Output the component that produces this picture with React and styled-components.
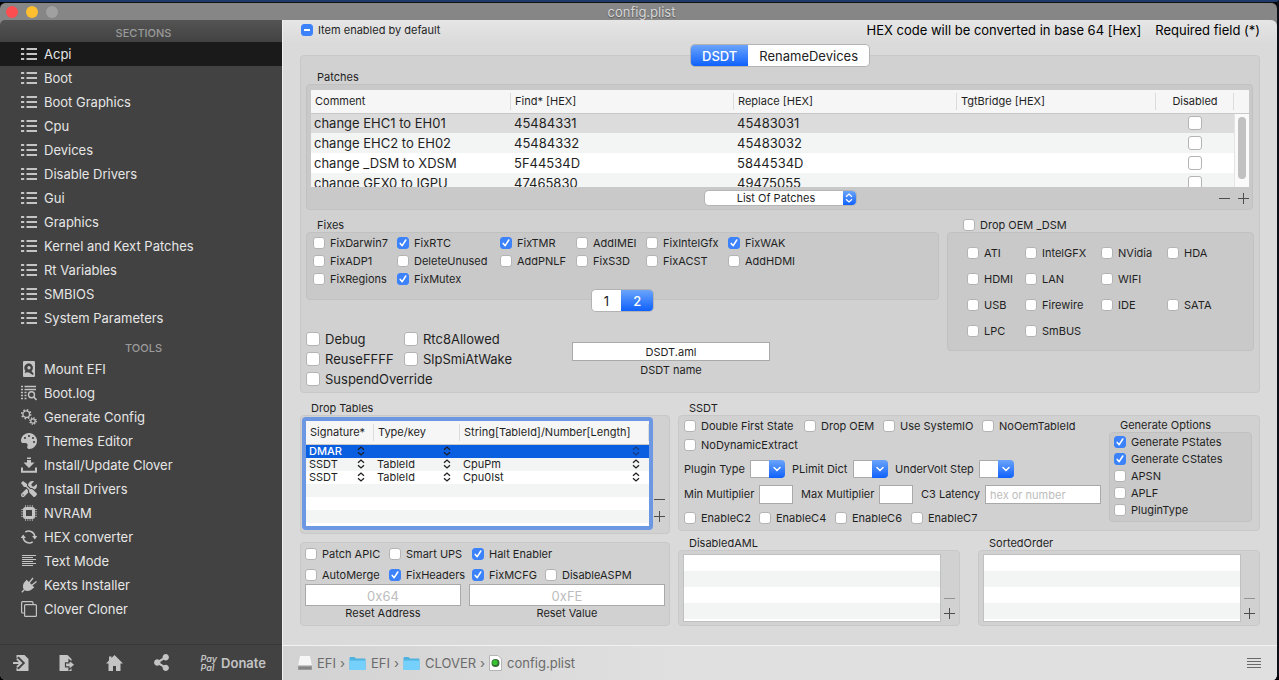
import React from 'react';
import styled, { createGlobalStyle, css } from 'styled-components';
import { FaPalette, FaShareAlt, FaTools } from 'react-icons/fa';

const COLORS = {
  blue: '#3b82fb',
  blueDark: '#0a5ee0',
  text: '#1f1f1f',
  sidebar: '#424242',
  sidebarText: '#e6e6e6',
  sidebarIcon: '#c4c4c4',
  stripe: '#f3f5f5',
};

const blueGradient = 'linear-gradient(#6aa4fa, #0f61fd)';

const GlobalStyle = createGlobalStyle`
  * {
    box-sizing: border-box;
  }

  body {
    margin: 0;
    background: #000;
    color: ${COLORS.text};
    font-family: Inter, 'Liberation Sans', sans-serif;
    font-size: 11px;
    line-height: 14px;
  }

  button,
  input,
  select {
    font: inherit;
    color: inherit;
    margin: 0;
    padding: 0;
    border: 0;
  }
`;

const Window = styled.div`
  display: flex;
  flex-direction: column;
  min-height: 100vh;
  border-top: 2px solid #1d3a6b;
  border-right: 2px solid #0b0f18;
  border-radius: 0 0 6px 6px;
  overflow: hidden;
`;

const TitleBar = styled.header`
  display: flex;
  align-items: center;
  height: 18px;
  padding-left: 6px;
  background: #868686;
  border-top: 1px solid #111;
  border-radius: 6px 6px 0 0;
`;

const Lights = styled.div`
  display: flex;
  flex: 1;
  gap: 8px;
`;

const Light = styled.button`
  width: 12px;
  height: 12px;
  border-radius: 50%;
  background: ${props => props.$color};
`;

const Title = styled.h1`
  margin: 0;
  font-size: 13px;
  font-weight: 400;
  line-height: 16px;
  color: #d6d6d6;
  text-shadow: 0 1px 1px #555;
`;

const TitleSpacer = styled.div`
  flex: 1;
`;

const Body = styled.div`
  display: flex;
  flex: 1;
  background: #868686;
`;

const Sidebar = styled.nav`
  display: flex;
  flex-direction: column;
  flex: none;
  width: 282px;
  background: linear-gradient(#545454, ${COLORS.sidebar} 22px);
  border-radius: 5px 0 0 0;
  color: ${COLORS.sidebarText};
`;

const SidebarHeading = styled.h2`
  margin: 0;
  height: ${props => (props.$spaced ? 27 : 22)}px;
  padding: ${props => (props.$spaced ? 11 : 6)}px 0 0 5px;
  font-size: 11px;
  font-weight: 500;
  line-height: 14px;
  text-align: center;
  color: #9b9b9b;
`;

const SidebarList = styled.ul`
  margin: 0;
  padding: 0;
  list-style: none;
`;

const SidebarLink = styled.a`
  display: flex;
  align-items: center;
  gap: 7px;
  height: 24px;
  padding-left: 21px;
  font-size: 13px;
  line-height: 16px;
  text-decoration: none;
  color: inherit;
  background: ${props => (props.$active ? '#1a1a1a' : 'transparent')};
`;

const Icon = styled.svg`
  display: block;
  flex: none;
  width: 16px;
  height: 16px;
  color: ${COLORS.sidebarIcon};
  fill: none;
  stroke: currentColor;
`;

const PaletteIcon = styled(FaPalette)`
  flex: none;
  color: ${COLORS.sidebarIcon};
  transform: scaleX(-1);
`;

const ToolsIcon = styled(FaTools)`
  flex: none;
  color: ${COLORS.sidebarIcon};
`;

const SidebarFooter = styled.div`
  display: flex;
  align-items: center;
  justify-content: space-between;
  height: 36px;
  margin-top: auto;
  padding: 0 16px 0 13px;
  border-top: 1px solid #383838;
`;

const FooterButton = styled.button`
  display: flex;
  align-items: center;
  gap: 4px;
  background: none;
  color: ${COLORS.sidebarIcon};
  font-size: 13px;
  font-weight: 600;
`;

const PayPal = styled.span`
  font-size: 9px;
  font-style: italic;
  line-height: 9px;
  text-align: left;
`;

const Main = styled.main`
  display: flex;
  flex: 1;
  flex-direction: column;
  min-width: 0;
  border-left: 1px solid #f0f0f0;
  border-radius: 0 6px 0 0;
  background: linear-gradient(#e6e6e6, #dadada 24px);
`;

const Content = styled.div`
  flex: 1;
  padding: 0 17px 18px;
`;

const TopRow = styled.div`
  display: flex;
  align-items: center;
  gap: 14px;
  height: 20px;
  margin-bottom: 15px;
  padding-left: 1px;
`;

const Hint = styled.span`
  font-size: 13px;
  line-height: 16px;
  color: #000;

  &:first-of-type {
    margin-left: auto;
  }
`;

const Panel = styled.section`
  background: #d1d1d1;
  border: 1px solid #c8c8c8;
  border-radius: 4px;
`;

const Well = styled.div`
  background: #c9c9c9;
  border: 1px solid #c1c1c1;
  border-radius: 4px;
`;

const GroupTitle = styled.h3`
  margin: 0;
  padding-left: 11px;
  font-size: 11px;
  font-weight: 400;
  line-height: 14px;
`;

const Segments = styled.div`
  display: flex;
  width: max-content;
  height: 21px;
  margin: ${props => (props.$top ? '-11px auto 0' : '-10px auto 0')};
  border-radius: 4px;
  box-shadow: 0 0 0 1px #b3b3b3;
  overflow: hidden;
`;

const Segment = styled.button`
  padding: 0 ${props => (props.$narrow ? 12 : 11)}px;
  font-size: 13px;
  line-height: 16px;
  background: ${props => (props.$active ? blueGradient : '#fff')};
  color: ${props => (props.$active ? '#fff' : '#222')};
  font-weight: ${props => (props.$active ? 500 : 400)};
`;

const CheckLabel = styled.label`
  display: flex;
  align-items: center;
  gap: 5px;
  font-size: ${props => (props.$large ? 13 : 11)}px;
  line-height: ${props => (props.$large ? 16 : 14)}px;
  white-space: nowrap;
`;

const CheckInput = styled.input`
  appearance: none;
  display: block;
  flex: none;
  width: ${props => (props.$large ? 14 : 12)}px;
  height: ${props => (props.$large ? 14 : 12)}px;
  border: 1px solid #b4b4b4;
  border-radius: 3px;
  background: #fff center / 100% no-repeat;

  &:checked {
    border-color: ${COLORS.blue};
    background-color: ${COLORS.blue};
    background-image: url("data:image/svg+xml,%3Csvg xmlns='http://www.w3.org/2000/svg' viewBox='0 0 10 10'%3E%3Cpath d='M2.2 5.4 4.2 7.7 7.8 2' fill='none' stroke='white' stroke-width='1.5' stroke-linecap='round' stroke-linejoin='round'/%3E%3C/svg%3E");
  }

  ${props =>
    props.$mixed &&
    css`
      &:checked {
        background-image: linear-gradient(#fff, #fff);
        background-size: 6px 2px;
      }
    `}
`;

const PatchesGroup = styled.div`
  padding: 4px 6px 0 5px;
`;

const PatchesWell = styled(Well)`
  padding: 5px 3px 1px 4px;
`;

const TableFrame = styled.div`
  position: relative;
  height: 97px;
  overflow: hidden;
  background: #fff;
`;

const PatchTable = styled.table`
  width: 100%;
  table-layout: fixed;
  border-collapse: collapse;
  font-size: 13px;
  line-height: 16px;

  th {
    height: 23px;
    padding: 0 4px;
    border-bottom: 1px solid #c8c8c8;
    background: linear-gradient(#dcdcdc, #dcdcdc) right center / 1px 17px no-repeat #f6f6f6;
    font-size: 11px;
    font-weight: 400;
    line-height: 14px;
    text-align: left;
  }

  th:nth-child(5) {
    text-align: center;
  }

  td {
    height: 20px;
    padding: 0 3px;
    white-space: nowrap;
  }

  tbody tr:nth-child(even) {
    background: ${COLORS.stripe};
  }

  tbody tr:first-child {
    background: #dcdcdc;
  }

  td input {
    margin: 0 auto;
  }
`;

const ScrollTrack = styled.div`
  position: absolute;
  top: 24px;
  right: 0;
  bottom: 0;
  width: 15px;
  padding: 3px;
  border-left: 1px solid #e4e4e4;
  background: #fafafa;
`;

const ScrollThumb = styled.div`
  width: 8px;
  height: 62px;
  border-radius: 4px;
  background: #c1c1c1;
`;

const PatchesFooter = styled.div`
  display: grid;
  grid-template-columns: 1fr auto 1fr;
  align-items: center;
  height: 21px;
`;

const SelectWrap = styled.div`
  position: relative;
  grid-column: 2;
  width: 151px;
  height: 14px;
  border-radius: 4px;
  background: #fff;
  box-shadow: 0 0 0 1px #b5b5b5;
  overflow: hidden;

  select {
    appearance: none;
    display: block;
    width: 100%;
    height: 14px;
    padding-right: 8px;
    background: transparent;
    text-align: center;
    text-align-last: center;
  }
`;

const SelectCap = styled.span`
  position: absolute;
  top: 0;
  right: 0;
  display: flex;
  align-items: center;
  justify-content: center;
  width: 13px;
  height: 100%;
  background: ${blueGradient};
  color: #fff;
  pointer-events: none;
`;

const AddRemove = styled.div`
  display: flex;
  flex-direction: ${props => (props.$vertical ? 'column' : 'row')};
  align-items: center;
  justify-content: flex-end;
  gap: ${props => props.$gap || 0}px;
  padding-bottom: ${props => props.$bottom || 0}px;
`;

const GlyphButton = styled.button`
  display: flex;
  background: none;
  color: ${props => (props.$muted ? '#949494' : '#4d4d4d')};
`;

const Columns = styled.div`
  display: grid;
  grid-template-columns: minmax(0, 633fr) minmax(0, 307fr);
  gap: 8px;
  padding: 8px 5px 3px;
`;

const FixesWell = styled(Well)`
  display: grid;
  grid-template-columns: 84px 103px 76px 70px 82px auto;
  justify-content: start;
  grid-auto-rows: 18px;
  height: 68px;
  padding: 1px 6px;
`;

const OptionsRow = styled.div`
  display: grid;
  grid-template-columns: 266px 198px;
  align-items: start;
  padding-top: 18px;
`;

const OptionsGrid = styled.div`
  display: grid;
  grid-template-columns: 98px auto;
  justify-content: start;
  grid-auto-rows: 20px;
`;

const Field = styled.label`
  display: flex;
  flex-direction: column;
  gap: ${props => props.$gap || 0}px;
  padding-top: ${props => props.$top || 0}px;
  text-align: center;
`;

const TextInput = styled.input`
  width: ${props => (props.$width ? `${props.$width}px` : '100%')};
  height: ${props => props.$height || 19}px;
  border: 1px solid #a9a9a9;
  background: #fff;
  text-align: ${props => (props.$left ? 'left' : 'center')};
  padding: 1px 4px 0;
  font-size: ${props => (props.$large ? 13 : 11)}px;

  &::placeholder {
    color: #bdbdbd;
    opacity: 1;
  }
`;

const DropOemTitle = styled.div`
  padding-left: 16px;
`;

const OemWell = styled(Well)`
  display: grid;
  grid-template-columns: 58px 76px 66px auto;
  justify-content: start;
  grid-auto-rows: 26px;
  height: 119px;
  padding: 7px 19px 0;
`;

const LowerGrid = styled.div`
  display: grid;
  grid-template-columns: minmax(0, 370fr) minmax(0, 582fr);
  gap: 8px;
  padding-top: 8px;
`;

const DropPanel = styled(Panel)`
  display: flex;
  gap: 1px;
  height: 119px;
  padding: 1px 4px 3px 1px;
`;

const FocusFrame = styled.div`
  flex: 1;
  border: 4px solid #6c97e3;
  border-radius: 4px;
  background: repeating-linear-gradient(#fff 0 13px, ${COLORS.stripe} 13px 26px) 0 24px;
  overflow: hidden;
`;

const DropTable = styled.table`
  width: 100%;
  table-layout: fixed;
  border-collapse: collapse;
  line-height: 13px;

  th {
    height: 23px;
    padding: 0 4px;
    border-bottom: 1px solid #c8c8c8;
    background: linear-gradient(#dcdcdc, #dcdcdc) right center / 1px 17px no-repeat #f6f6f6;
    font-weight: 400;
    text-align: left;
    white-space: nowrap;
  }

  td {
    height: 13px;
    padding: 0 9px 0 3px;
  }

  tbody tr:first-child {
    background: ${COLORS.blueDark};
  }

  tbody tr:first-child span {
    color: #fff;
    font-weight: 500;
  }
`;

const Cell = styled.div`
  display: flex;
  align-items: center;
  justify-content: space-between;
  height: 13px;
`;

const ResetPanel = styled(Panel)`
  height: 84px;
  margin-top: 8px;
  padding: 0 4px;
`;

const ResetChecks = styled.div`
  display: grid;
  grid-template-columns: 84px 83px 73px auto;
  justify-content: start;
  grid-auto-rows: 21px;
  height: 41px;

  label:nth-child(4) {
    grid-column: 1;
  }
`;

const ResetFields = styled.div`
  display: grid;
  grid-template-columns: 156fr 196fr;
  gap: 8px;
`;

const SsdtPanel = styled(Panel)`
  display: flex;
  justify-content: space-between;
  height: 116px;
  padding: 0 7px 0 5px;
`;

const SsdtRow = styled.div`
  display: grid;
  grid-template-columns: ${props => props.$columns};
  align-items: center;
  height: ${props => props.$height}px;
  white-space: nowrap;
`;

const Combo = styled.span`
  position: relative;
  display: block;
  width: 35px;
  height: 18px;
  border: 1px solid #a9a9a9;
  border-radius: 0 4px 4px 0;
  background: #fff;

  select {
    appearance: none;
    display: block;
    width: 100%;
    height: 100%;
    background: transparent;
  }
`;

const ComboCap = styled.span`
  position: absolute;
  top: -1px;
  right: -1px;
  bottom: -1px;
  display: flex;
  align-items: center;
  justify-content: center;
  width: 16px;
  border-radius: 0 4px 4px 0;
  background: ${blueGradient};
  color: #fff;
  pointer-events: none;
`;

const GenerateGroup = styled.div`
  width: 143px;
  padding-top: 2px;
`;

const GenerateWell = styled(Well)`
  display: grid;
  grid-auto-rows: 17px;
  height: 90px;
  padding: 0 4px;
`;

const ListsRow = styled.div`
  display: grid;
  grid-template-columns: 1fr 1fr;
  gap: 18px;
  padding-top: 5px;
`;

const ListPanel = styled(Panel)`
  display: flex;
  gap: 3px;
  height: 76px;
  padding: 3px 4px 3px 4px;
`;

const StripedList = styled.div`
  flex: 1;
  border: 1px solid #c0c0c0;
  background: repeating-linear-gradient(#fff 0 16px, ${COLORS.stripe} 16px 32px);
`;

const PathBar = styled.footer`
  display: flex;
  align-items: center;
  gap: 4px;
  height: 35px;
  padding: 0 16px 0 15px;
  border-top: 1px solid #f2f2f2;
  background: linear-gradient(90deg, #d2d2d2, #e0e0e0 40%);
  font-size: 13px;
  line-height: 16px;
  color: #6b6b6b;
`;

const Crumb = styled.a`
  display: flex;
  align-items: center;
  gap: 5px;
  color: inherit;
  text-decoration: none;
`;

const MenuButton = styled.button`
  display: flex;
  margin-left: auto;
  background: none;
  color: #6a6a6a;
`;

const ListIcon = () => (
  <Icon viewBox="0 0 16 16" strokeWidth="1.9">
    <path d="M0 3h3.200M0 8h3.200M0 13h3.200M5.500 3H16M5.500 8H16M5.500 13H16" />
  </Icon>
);

const DiskIcon = () => (
  <Icon viewBox="0 0 16 16">
    <path
      fill="currentColor"
      stroke="none"
      fillRule="evenodd"
      d="M3.500 0h9.200A1.300 1.300 0 0 1 14 1.300V15a1 1 0 0 1-1 1H3a1 1 0 0 1-1-1V1.300A1.300 1.300 0 0 1 3.500 0zM8 2.200a4.600 4.600 0 0 0-3.600 7.500l-.8 2.300 2.600-.8c.6.200 1.200.300 1.800.300L11.800 14l1-1-2.300-3A4.600 4.600 0 0 0 8 2.200zM8 5a1.700 1.700 0 1 1 0 3.400A1.700 1.700 0 0 1 8 5z"
    />
  </Icon>
);

const LogIcon = () => (
  <Icon viewBox="0 0 16 16" strokeWidth="1.4">
    <path d="M0 1.500h2M0 4.500h2M0 7.500h2M0 10.500h2M0 13.500h2M3.500 1.500H15M3.500 4.500H15M3.500 7.500h2M3.500 10.500h2M3.500 13.500h2" />
    <circle cx="10.500" cy="9.800" r="3" />
    <path d="M12.700 12 15.500 15" strokeWidth="1.600" />
  </Icon>
);

const GearsIcon = () => (
  <Icon viewBox="0 0 16 16">
    <circle cx="5.200" cy="5.200" r="3.300" strokeWidth="1.300" />
    <circle cx="5.200" cy="5.200" r="4.400" strokeWidth="1.700" strokeDasharray="1.500 1.956" />
    <circle cx="12" cy="12" r="2.200" strokeWidth="1.200" />
    <circle cx="12" cy="12" r="3.200" strokeWidth="1.400" strokeDasharray="1.200 1.313" />
  </Icon>
);

const DownloadIcon = () => (
  <Icon viewBox="0 0 16 16">
    <path fill="currentColor" stroke="none" d="M6 .5h4V2H6zM6 3h4v2.500h3.500L8 11 2.500 5.500H6z" />
    <path d="M1 10.500v4.200h14v-4.200" strokeWidth="2" />
  </Icon>
);

const ChipIcon = () => (
  <Icon viewBox="0 0 16 16">
    <rect x="3.500" y="3.500" width="9" height="9" rx="1" strokeWidth="3" />
    <path
      d="M4.500 0v2M6.800 0v2M9.100 0v2M11.400 0v2M4.500 14v2M6.800 14v2M9.100 14v2M11.400 14v2M0 4.500h2M0 6.800h2M0 9.100h2M0 11.400h2M14 4.500h2M14 6.800h2M14 9.100h2M14 11.400h2"
      opacity="0.700"
    />
  </Icon>
);

const RefreshIcon = () => (
  <Icon viewBox="0 0 16 16" strokeWidth="1.500">
    <path d="M4.300 3.200A6 6 0 0 1 13.800 8M11.700 12.800A6 6 0 0 1 2.200 8" />
    <path fill="currentColor" stroke="none" d="M-.3 9 2.200 5.500 4.900 9zM11.100 7h5.200l-2.500 3.500z" />
  </Icon>
);

const TextIcon = () => (
  <Icon viewBox="0 0 16 16" shapeRendering="crispEdges">
    <path d="M1 2.500h14M1 4.500h11M1 6.500h14M1 8.500h11M1 10.500h14M1 12.500h11" />
  </Icon>
);

const PlugIcon = () => (
  <Icon viewBox="0 0 16 16" strokeWidth="1.300">
    <path fill="currentColor" stroke="none" d="M5.500 3.500 12.500 10.500C10.500 14 6 15.200 3.200 12.800 .8 10 2 5.500 5.500 3.500z" />
    <path d="M5.200 3.200 12.800 10.800M8 6 12 1M10.500 8.500 15.500 4.500M3.500 12.500.8 15.300" />
  </Icon>
);

const CopyIcon = () => (
  <Icon viewBox="0 0 16 16" strokeWidth="1.200">
    <rect x="3.600" y="3.600" width="11.800" height="11.800" rx="1" />
    <path d="M3 12H1.600a1 1 0 0 1-1-1V1.600a1 1 0 0 1 1-1H11a1 1 0 0 1 1 1V3" />
  </Icon>
);

const ImportIcon = () => (
  <Icon viewBox="0 0 16 16">
    <path fill="currentColor" stroke="none" d="M3.500 0h8l4 4v12h-12z" />
    <path d="M0 8h8M4 3l5 5-5 5" stroke={COLORS.sidebar} strokeWidth="4.500" />
    <path d="M0 8h8M4 3.800 8.200 8 4 12.200" strokeWidth="1.900" />
  </Icon>
);

const ExportIcon = () => (
  <Icon viewBox="0 0 16 16">
    <path fill="currentColor" stroke="none" d="M.5 0h8l4 4v12H.5z" />
    <path
      fill="currentColor"
      stroke={COLORS.sidebar}
      strokeWidth="1.200"
      d="M6.500 7.800H10V4.800l6 5-6 5v-3H6.500z"
    />
  </Icon>
);

const HomeIcon = () => (
  <svg width="17" height="16" viewBox="0 0 17 16" fill="currentColor">
    <path d="M8.500 0 17 8.500h-2.500V16H10v-5H7v5H2.500V8.500H0l3-3V1.500h2.500V3z" />
  </svg>
);

const UpDownIcon = ({ faded }) => (
  <svg width="8" height="10" viewBox="0 0 8 10" fill="none" stroke="currentColor" strokeWidth="1.300" opacity={faded ? 0.5 : 1}>
    <path d="M1 3.700 4 1l3 2.700M1 6.300 4 9l3-2.700" />
  </svg>
);

const ChevronIcon = () => (
  <svg width="8" height="6" viewBox="0 0 8 6" fill="none" stroke="currentColor" strokeWidth="1.500" strokeLinecap="round">
    <path d="m1 1.500 3 3 3-3" />
  </svg>
);

const Minus = ({ muted }) => (
  <GlyphButton type="button" aria-label="Remove" $muted={muted}>
    <svg width="11" height="12" viewBox="0 0 11 12" stroke="currentColor">
      <path d="M0 6.500h11" />
    </svg>
  </GlyphButton>
);

const Plus = () => (
  <GlyphButton type="button" aria-label="Add">
    <svg width="11" height="12" viewBox="0 0 11 12" stroke="currentColor">
      <path d="M0 6.500h11M5.500 1v11" />
    </svg>
  </GlyphButton>
);

const DriveIcon = () => (
  <svg width="14" height="16" viewBox="0 0 14 16">
    <path d="M2 1h10l2 10H0z" fill="#f6f6f6" />
    <path d="M0 10.500h14V15H0z" fill="#9a9a9a" />
    <path d="M1 13h12" stroke="#6f6f6f" />
  </svg>
);

const FolderIcon = () => (
  <svg width="17" height="15" viewBox="0 0 17 15">
    <path d="M.5 2q0-1 1-1h4l1.500 1.500h8.500q1 0 1 1V13q0 1-1 1h-14q-1 0-1-1z" fill="#4fb2df" />
    <path d="M.5 4.500h16V13q0 1-1 1h-14q-1 0-1-1z" fill="#75d0fb" />
  </svg>
);

const PlistIcon = () => (
  <svg width="13" height="16" viewBox="0 0 13 16">
    <path d="M.5.5h8.500l3.500 3.500v11.500H.5z" fill="#fff" stroke="#b5b5b5" />
    <circle cx="6.500" cy="8" r="4" fill="#3a6b3a" />
    <circle cx="6" cy="7.500" r="2.600" fill="#35c52c" />
  </svg>
);

const SECTIONS = [
  'Acpi',
  'Boot',
  'Boot Graphics',
  'Cpu',
  'Devices',
  'Disable Drivers',
  'Gui',
  'Graphics',
  'Kernel and Kext Patches',
  'Rt Variables',
  'SMBIOS',
  'System Parameters',
];

const TOOLS = [
  { text: 'Mount EFI', icon: <DiskIcon /> },
  { text: 'Boot.log', icon: <LogIcon /> },
  { text: 'Generate Config', icon: <GearsIcon /> },
  { text: 'Themes Editor', icon: <PaletteIcon size={16} /> },
  { text: 'Install/Update Clover', icon: <DownloadIcon /> },
  { text: 'Install Drivers', icon: <ToolsIcon size={16} /> },
  { text: 'NVRAM', icon: <ChipIcon /> },
  { text: 'HEX converter', icon: <RefreshIcon /> },
  { text: 'Text Mode', icon: <TextIcon /> },
  { text: 'Kexts Installer', icon: <PlugIcon /> },
  { text: 'Clover Cloner', icon: <CopyIcon /> },
];

const PATCHES = [
  ['change EHC1 to EH01', '45484331', '45483031'],
  ['change EHC2 to EH02', '45484332', '45483032'],
  ['change _DSM to XDSM', '5F44534D', '5844534D'],
  ['change GFX0 to IGPU', '47465830', '49475055'],
];

const FIXES = [
  ['FixDarwin7'],
  ['FixRTC', true],
  ['FixTMR', true],
  ['AddIMEI'],
  ['FixIntelGfx'],
  ['FixWAK', true],
  ['FixADP1'],
  ['DeleteUnused'],
  ['AddPNLF'],
  ['FixS3D'],
  ['FixACST'],
  ['AddHDMI'],
  ['FixRegions'],
  ['FixMutex', true],
];

const OEM = [
  ['ATI', 'IntelGFX', 'NVidia', 'HDA'],
  ['HDMI', 'LAN', 'WIFI', null],
  ['USB', 'Firewire', 'IDE', 'SATA'],
  ['LPC', 'SmBUS'],
];

const DROP_TABLES = [
  ['DMAR', '', ''],
  ['SSDT', 'TableId', 'CpuPm'],
  ['SSDT', 'TableId', 'Cpu0Ist'],
];

const Check = ({ label, checked, large, mixed }) => (
  <CheckLabel $large={large}>
    <CheckInput type="checkbox" defaultChecked={checked} $large={large} $mixed={mixed} />
    {label}
  </CheckLabel>
);

const ComboBox = ({ label }) => (
  <Combo>
    <select aria-label={label} />
    <ComboCap>
      <ChevronIcon />
    </ComboCap>
  </Combo>
);

const EditableList = ({ title }) => (
  <div>
    <GroupTitle>{title}</GroupTitle>
    <ListPanel>
      <StripedList />
      <AddRemove $vertical $gap={3} $bottom={3}>
        <Minus muted />
        <Plus />
      </AddRemove>
    </ListPanel>
  </div>
);

const SideNav = () => (
  <Sidebar>
    <SidebarHeading>SECTIONS</SidebarHeading>
    <SidebarList>
      {SECTIONS.map((text, index) => (
        <li key={text}>
          <SidebarLink href="#" $active={index === 0}>
            <ListIcon />
            {text}
          </SidebarLink>
        </li>
      ))}
    </SidebarList>
    <SidebarHeading $spaced>TOOLS</SidebarHeading>
    <SidebarList>
      {TOOLS.map(({ text, icon }) => (
        <li key={text}>
          <SidebarLink href="#">
            {icon}
            {text}
          </SidebarLink>
        </li>
      ))}
    </SidebarList>
    <SidebarFooter>
      <FooterButton type="button" aria-label="Import">
        <ImportIcon />
      </FooterButton>
      <FooterButton type="button" aria-label="Export">
        <ExportIcon />
      </FooterButton>
      <FooterButton type="button" aria-label="Home">
        <HomeIcon />
      </FooterButton>
      <FooterButton type="button" aria-label="Share">
        <FaShareAlt size={17} />
      </FooterButton>
      <FooterButton type="button">
        <PayPal>
          Pay
          <br />
          Pal
        </PayPal>
        Donate
      </FooterButton>
    </SidebarFooter>
  </Sidebar>
);

const Patches = () => (
  <PatchesGroup>
    <GroupTitle>Patches</GroupTitle>
    <PatchesWell>
      <TableFrame>
        <PatchTable>
          <colgroup>
            <col width="200" />
            <col width="223" />
            <col width="223" />
            <col width="199" />
            <col width="78" />
            <col width="16" />
          </colgroup>
          <thead>
            <tr>
              <th>Comment</th>
              <th>Find* [HEX]</th>
              <th>Replace [HEX]</th>
              <th>TgtBridge [HEX]</th>
              <th>Disabled</th>
              <th />
            </tr>
          </thead>
          <tbody>
            {PATCHES.map(([comment, find, replace]) => (
              <tr key={comment}>
                <td>{comment}</td>
                <td>{find}</td>
                <td>{replace}</td>
                <td />
                <td>
                  <CheckInput type="checkbox" aria-label={`Disable ${comment}`} $large />
                </td>
                <td />
              </tr>
            ))}
          </tbody>
        </PatchTable>
        <ScrollTrack>
          <ScrollThumb />
        </ScrollTrack>
      </TableFrame>
      <PatchesFooter>
        <SelectWrap>
          <select aria-label="List Of Patches">
            <option>List Of Patches</option>
          </select>
          <SelectCap>
            <UpDownIcon />
          </SelectCap>
        </SelectWrap>
        <AddRemove $gap={8}>
          <Minus />
          <Plus />
        </AddRemove>
      </PatchesFooter>
    </PatchesWell>
  </PatchesGroup>
);

const DropTables = () => (
  <div>
    <GroupTitle>Drop Tables</GroupTitle>
    <DropPanel>
      <FocusFrame>
        <DropTable>
          <colgroup>
            <col width="68" />
            <col width="86" />
            <col width="189" />
          </colgroup>
          <thead>
            <tr>
              <th>Signature*</th>
              <th>Type/key</th>
              <th>String[TableId]/Number[Length]</th>
            </tr>
          </thead>
          <tbody>
            {DROP_TABLES.map((cells, row) => (
              <tr key={row}>
                {cells.map((cell, column) => (
                  <td key={column}>
                    <Cell>
                      <span>{cell}</span>
                      <UpDownIcon faded={row === 0 && column === 2} />
                    </Cell>
                  </td>
                ))}
              </tr>
            ))}
          </tbody>
        </DropTable>
      </FocusFrame>
      <AddRemove $vertical $gap={5} $bottom={8}>
        <Minus />
        <Plus />
      </AddRemove>
    </DropPanel>
    <ResetPanel>
      <ResetChecks>
        <Check label="Patch APIC" />
        <Check label="Smart UPS" />
        <Check label="Halt Enabler" checked />
        <Check label="AutoMerge" />
        <Check label="FixHeaders" checked />
        <Check label="FixMCFG" checked />
        <Check label="DisableASPM" />
      </ResetChecks>
      <ResetFields>
        <Field>
          <TextInput placeholder="0x64" $height={22} $large />
          Reset Address
        </Field>
        <Field>
          <TextInput placeholder="0xFE" $height={22} $large />
          Reset Value
        </Field>
      </ResetFields>
    </ResetPanel>
  </div>
);

const Ssdt = () => (
  <div>
    <GroupTitle>SSDT</GroupTitle>
    <SsdtPanel>
      <div>
        <SsdtRow $columns="120px 79px 99px auto" $height={20}>
          <Check label="Double First State" />
          <Check label="Drop OEM" />
          <Check label="Use SystemIO" />
          <Check label="NoOemTableId" />
        </SsdtRow>
        <SsdtRow $columns="auto" $height={18}>
          <Check label="NoDynamicExtract" />
        </SsdtRow>
        <SsdtRow $columns="66px 42px 61px 42px 84px 35px" $height={30}>
          <span>Plugin Type</span>
          <ComboBox label="Plugin Type" />
          <span>PLimit Dict</span>
          <ComboBox label="PLimit Dict" />
          <span>UnderVolt Step</span>
          <ComboBox label="UnderVolt Step" />
        </SsdtRow>
        <SsdtRow $columns="75px 42px 78px 42px 64px 116px" $height={20}>
          <label htmlFor="minMultiplier">Min Multiplier</label>
          <TextInput id="minMultiplier" $width={34} />
          <label htmlFor="maxMultiplier">Max Multiplier</label>
          <TextInput id="maxMultiplier" $width={34} />
          <label htmlFor="c3Latency">C3 Latency</label>
          <TextInput id="c3Latency" placeholder="hex or number" $left />
        </SsdtRow>
        <SsdtRow $columns="75px 76px 76px auto" $height={28}>
          <Check label="EnableC2" />
          <Check label="EnableC4" />
          <Check label="EnableC6" />
          <Check label="EnableC7" />
        </SsdtRow>
      </div>
      <GenerateGroup>
        <GroupTitle>Generate Options</GroupTitle>
        <GenerateWell>
          <Check label="Generate PStates" checked />
          <Check label="Generate CStates" checked />
          <Check label="APSN" />
          <Check label="APLF" />
          <Check label="PluginType" />
        </GenerateWell>
      </GenerateGroup>
    </SsdtPanel>
    <ListsRow>
      <EditableList title="DisabledAML" />
      <EditableList title="SortedOrder" />
    </ListsRow>
  </div>
);

const App = () => (
  <Window>
    <GlobalStyle />
    <TitleBar>
      <Lights>
        <Light type="button" aria-label="Close" $color="#fc4e50" />
        <Light type="button" aria-label="Minimize" $color="#fdbf2f" />
        <Light type="button" aria-label="Zoom" $color="#a0a0a0" />
      </Lights>
      <Title>config.plist</Title>
      <TitleSpacer />
    </TitleBar>
    <Body>
      <SideNav />
      <Main>
        <Content>
          <TopRow>
            <Check label="Item enabled by default" checked mixed />
            <Hint>HEX code will be converted in base 64 [Hex]</Hint>
            <Hint>Required field (*)</Hint>
          </TopRow>
          <Panel>
            <Segments $top>
              <Segment type="button" $active>
                DSDT
              </Segment>
              <Segment type="button">RenameDevices</Segment>
            </Segments>
            <Patches />
            <Columns>
              <div>
                <GroupTitle>Fixes</GroupTitle>
                <FixesWell>
                  {FIXES.map(([label, checked]) => (
                    <Check key={label} label={label} checked={checked} />
                  ))}
                </FixesWell>
                <Segments>
                  <Segment type="button" $narrow>
                    1
                  </Segment>
                  <Segment type="button" $narrow $active>
                    2
                  </Segment>
                </Segments>
                <OptionsRow>
                  <OptionsGrid>
                    <Check label="Debug" large />
                    <Check label="Rtc8Allowed" large />
                    <Check label="ReuseFFFF" large />
                    <Check label="SlpSmiAtWake" large />
                    <Check label="SuspendOverride" large />
                  </OptionsGrid>
                  <Field $top={13} $gap={2}>
                    <TextInput defaultValue="DSDT.aml" />
                    DSDT name
                  </Field>
                </OptionsRow>
              </div>
              <div>
                <DropOemTitle>
                  <Check label="Drop OEM _DSM" />
                </DropOemTitle>
                <OemWell>
                  {OEM.flat().map((label, index) =>
                    label ? <Check key={label} label={label} /> : <span key={index} />
                  )}
                </OemWell>
              </div>
            </Columns>
          </Panel>
          <LowerGrid>
            <DropTables />
            <Ssdt />
          </LowerGrid>
        </Content>
        <PathBar>
          <Crumb href="#">
            <DriveIcon />
            EFI
          </Crumb>
          ›
          <Crumb href="#">
            <FolderIcon />
            EFI
          </Crumb>
          ›
          <Crumb href="#">
            <FolderIcon />
            CLOVER
          </Crumb>
          ›
          <Crumb href="#">
            <PlistIcon />
            config.plist
          </Crumb>
          <MenuButton type="button" aria-label="Menu">
            <svg width="14" height="11" viewBox="0 0 14 11" stroke="currentColor">
              <path d="M0 .5h14M0 3.500h14M0 6.500h14M0 9.500h14" />
            </svg>
          </MenuButton>
        </PathBar>
      </Main>
    </Body>
  </Window>
);

export default App;
